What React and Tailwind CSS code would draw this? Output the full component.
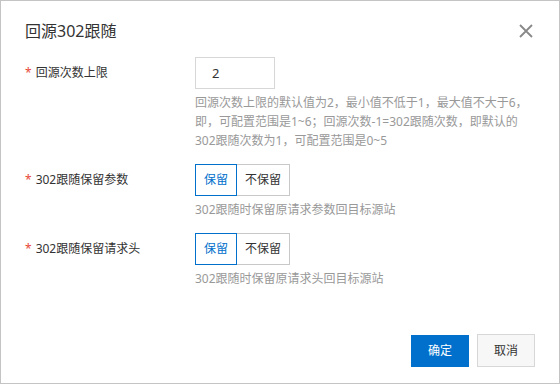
import { useState } from "react";

const font = {
    fontFamily: '"Noto Sans", "Noto Sans CJK SC", sans-serif',
};

function Segmented({ value, onChange }) {
    const options = [
        { key: "keep", label: "保留" },
        { key: "drop", label: "不保留" },
    ];
    return (
        <div className="flex">
            {options.map((o, i) => {
                const active = value === o.key;
                return (
                    <button
                        key={o.key}
                        type="button"
                        onClick={() => onChange(o.key)}
                        className={
                            "h-[32px] px-[8px] text-[12px] border bg-white " +
                            (i > 0 ? "-ml-px " : "") +
                            (active
                                ? "border-[#0070cc] text-[#0070cc] relative z-10"
                                : "border-[#c8c8c8] text-[#333]")
                        }
                    >
                        {o.label}
                    </button>
                );
            })}
        </div>
    );
}

function Field({ label, children, help }) {
    return (
        <div className="flex">
            <div className="w-[170px] h-[32px] flex items-center text-[12px] text-[#333]">
                <span className="text-[#e84738] mr-[4px]">*</span>
                {label}
            </div>
            <div>
                {children}
                <div className="mt-[4px] text-[12px] leading-[19px] text-[#999]">
                    {help}
                </div>
            </div>
        </div>
    );
}

export default function App() {
    const [count, setCount] = useState("2");
    const [params, setParams] = useState("keep");
    const [headers, setHeaders] = useState("keep");

    return (
        <div
            className="w-[560px] h-[384px] bg-white border border-[#c4c4c4] flex flex-col"
            style={font}
        >
            {/* header */}
            <div className="flex items-center justify-between pl-[24px] pr-[26px] pt-[20px]">
                <h1 className="text-[16px] leading-[20px] text-[#333]">
                    回源302跟随
                </h1>
                <button type="button" className="text-[#888]">
                    <svg width="14" height="14" viewBox="0 0 14 14">
                        <path
                            d="M1 1L13 13M13 1L1 13"
                            stroke="currentColor"
                            strokeWidth="1.8"
                        />
                    </svg>
                </button>
            </div>

            {/* body */}
            <div className="flex flex-col gap-[14px] pl-[24px] pt-[16px]">
                <Field
                    label="回源次数上限"
                    help={
                        <>
                            <div>回源次数上限的默认值为2，最小值不低于1，最大值不大于6，</div>
                            <div>即，可配置范围是1~6；回源次数-1=302跟随次数，即默认的</div>
                            <div>302跟随次数为1，可配置范围是0~5</div>
                        </>
                    }
                >
                    <input
                        value={count}
                        onChange={(e) => setCount(e.target.value)}
                        className="w-[80px] h-[32px] border border-[#d7d7d7] pl-[16px] text-[13px] text-[#333] outline-none"
                    />
                </Field>
                <Field label="302跟随保留参数" help="302跟随时保留原请求参数回目标源站">
                    <Segmented value={params} onChange={setParams} />
                </Field>
                <Field label="302跟随保留请求头" help="302跟随时保留原请求头回目标源站">
                    <Segmented value={headers} onChange={setHeaders} />
                </Field>
            </div>

            {/* footer */}
            <div className="mt-auto mb-[16px] flex justify-end gap-[8px] pr-[24px]">
                <button
                    type="button"
                    className="w-[58px] h-[32px] bg-[#0070cc] text-white text-[12px]"
                >
                    确定
                </button>
                <button
                    type="button"
                    className="w-[58px] h-[33px] -mt-px bg-[#f7f7f7] border border-[#d7d7d7] text-[#333] text-[12px]"
                >
                    取消
                </button>
            </div>
        </div>
    );
}
